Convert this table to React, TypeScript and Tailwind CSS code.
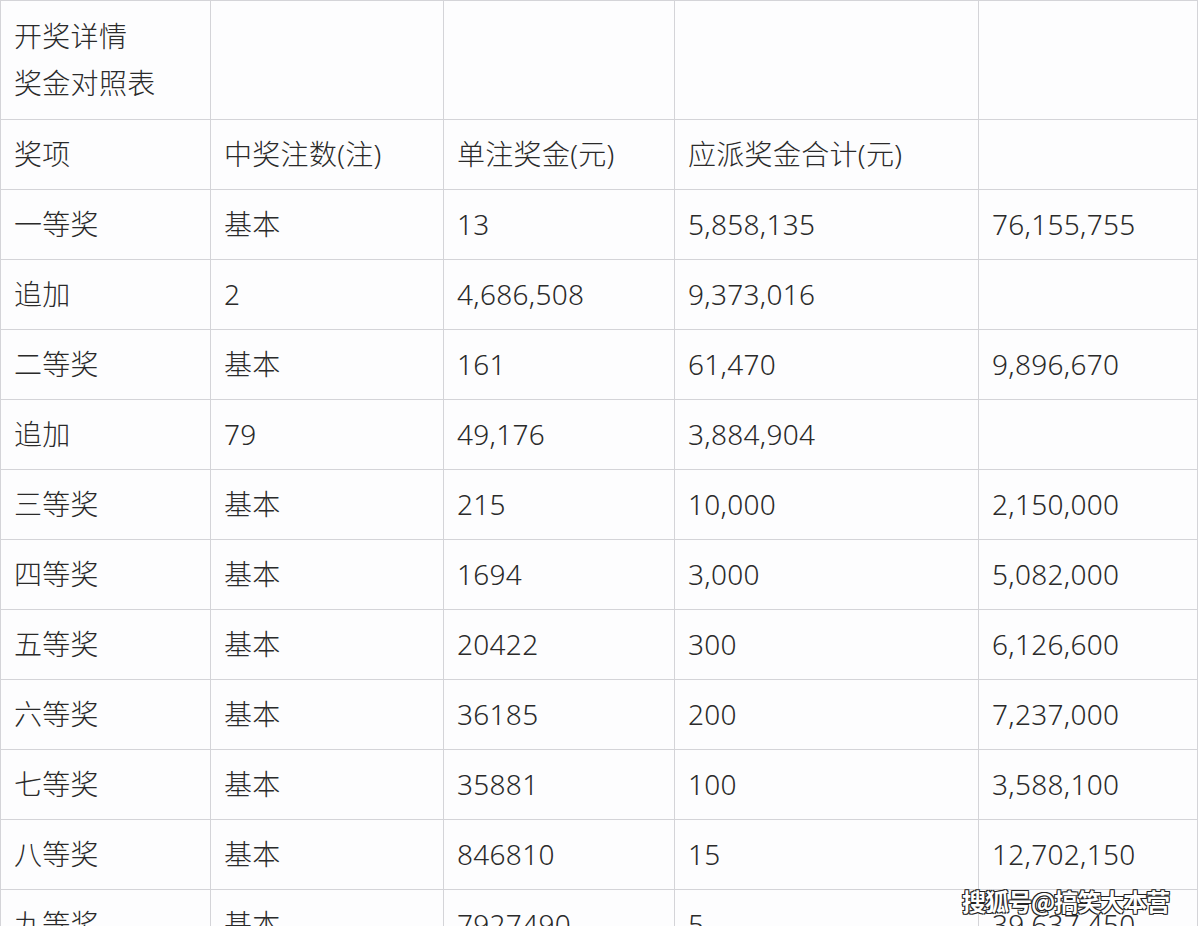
import React from "react"

type Row = [string, string, string, string, string]

// 奖项 rows of the prize table
const rows: Row[] = [
    ["一等奖", "基本", "13", "5,858,135", "76,155,755"],
    ["追加", "2", "4,686,508", "9,373,016", ""],
    ["二等奖", "基本", "161", "61,470", "9,896,670"],
    ["追加", "79", "49,176", "3,884,904", ""],
    ["三等奖", "基本", "215", "10,000", "2,150,000"],
    ["四等奖", "基本", "1694", "3,000", "5,082,000"],
    ["五等奖", "基本", "20422", "300", "6,126,600"],
    ["六等奖", "基本", "36185", "200", "7,237,000"],
    ["七等奖", "基本", "35881", "100", "3,588,100"],
    ["八等奖", "基本", "846810", "15", "12,702,150"],
    ["九等奖", "基本", "7927490", "5", "39,637,450"],
]

const cell = "border border-[#d4d4d8] px-[13px] pb-[1px] align-middle text-left font-light tracking-[0.3px]"

export default function App() {
    return (
        <div
            className="relative h-[926px] w-[1198px] overflow-hidden bg-white text-[#2a2a2a]"
            style={{ fontFamily: '"Noto Sans", "Noto Sans CJK SC", sans-serif' }}
        >
            <table className="table-fixed border-collapse bg-[#fdfdfe] text-[28px] leading-[47px]">
                <colgroup>
                    <col className="w-[210px]" />
                    <col className="w-[233px]" />
                    <col className="w-[231px]" />
                    <col className="w-[304px]" />
                    <col className="w-[219px]" />
                </colgroup>
                <tbody>
                    <tr className="h-[119px]">
                        <td className={cell}>
                            <div>开奖详情</div>
                            <div>奖金对照表</div>
                        </td>
                        <td className={cell}></td>
                        <td className={cell}></td>
                        <td className={cell}></td>
                        <td className={cell}></td>
                    </tr>
                    <tr className="h-[70px]">
                        <th className={cell}>奖项</th>
                        <th className={cell}>中奖注数(注)</th>
                        <th className={cell}>单注奖金(元)</th>
                        <th className={cell}>应派奖金合计(元)</th>
                        <th className={cell}></th>
                    </tr>
                    {rows.map((r, i) => (
                        <tr key={i} className="h-[70px]">
                            {r.map((v, j) => (
                                <td key={j} className={cell}>{v}</td>
                            ))}
                        </tr>
                    ))}
                </tbody>
            </table>

            {/* watermark */}
            <div
                className="absolute left-[962px] top-[884px] text-[24px] font-bold leading-[34px] tracking-[-1px] text-white [text-shadow:1px_1px_0_#222,-1px_-1px_0_#222,1px_-1px_0_#222,-1px_1px_0_#222]"
                style={{ fontFamily: '"Noto Sans CJK SC", sans-serif' }}
            >
                搜狐号@搞笑大本营
            </div>
        </div>
    )
}
